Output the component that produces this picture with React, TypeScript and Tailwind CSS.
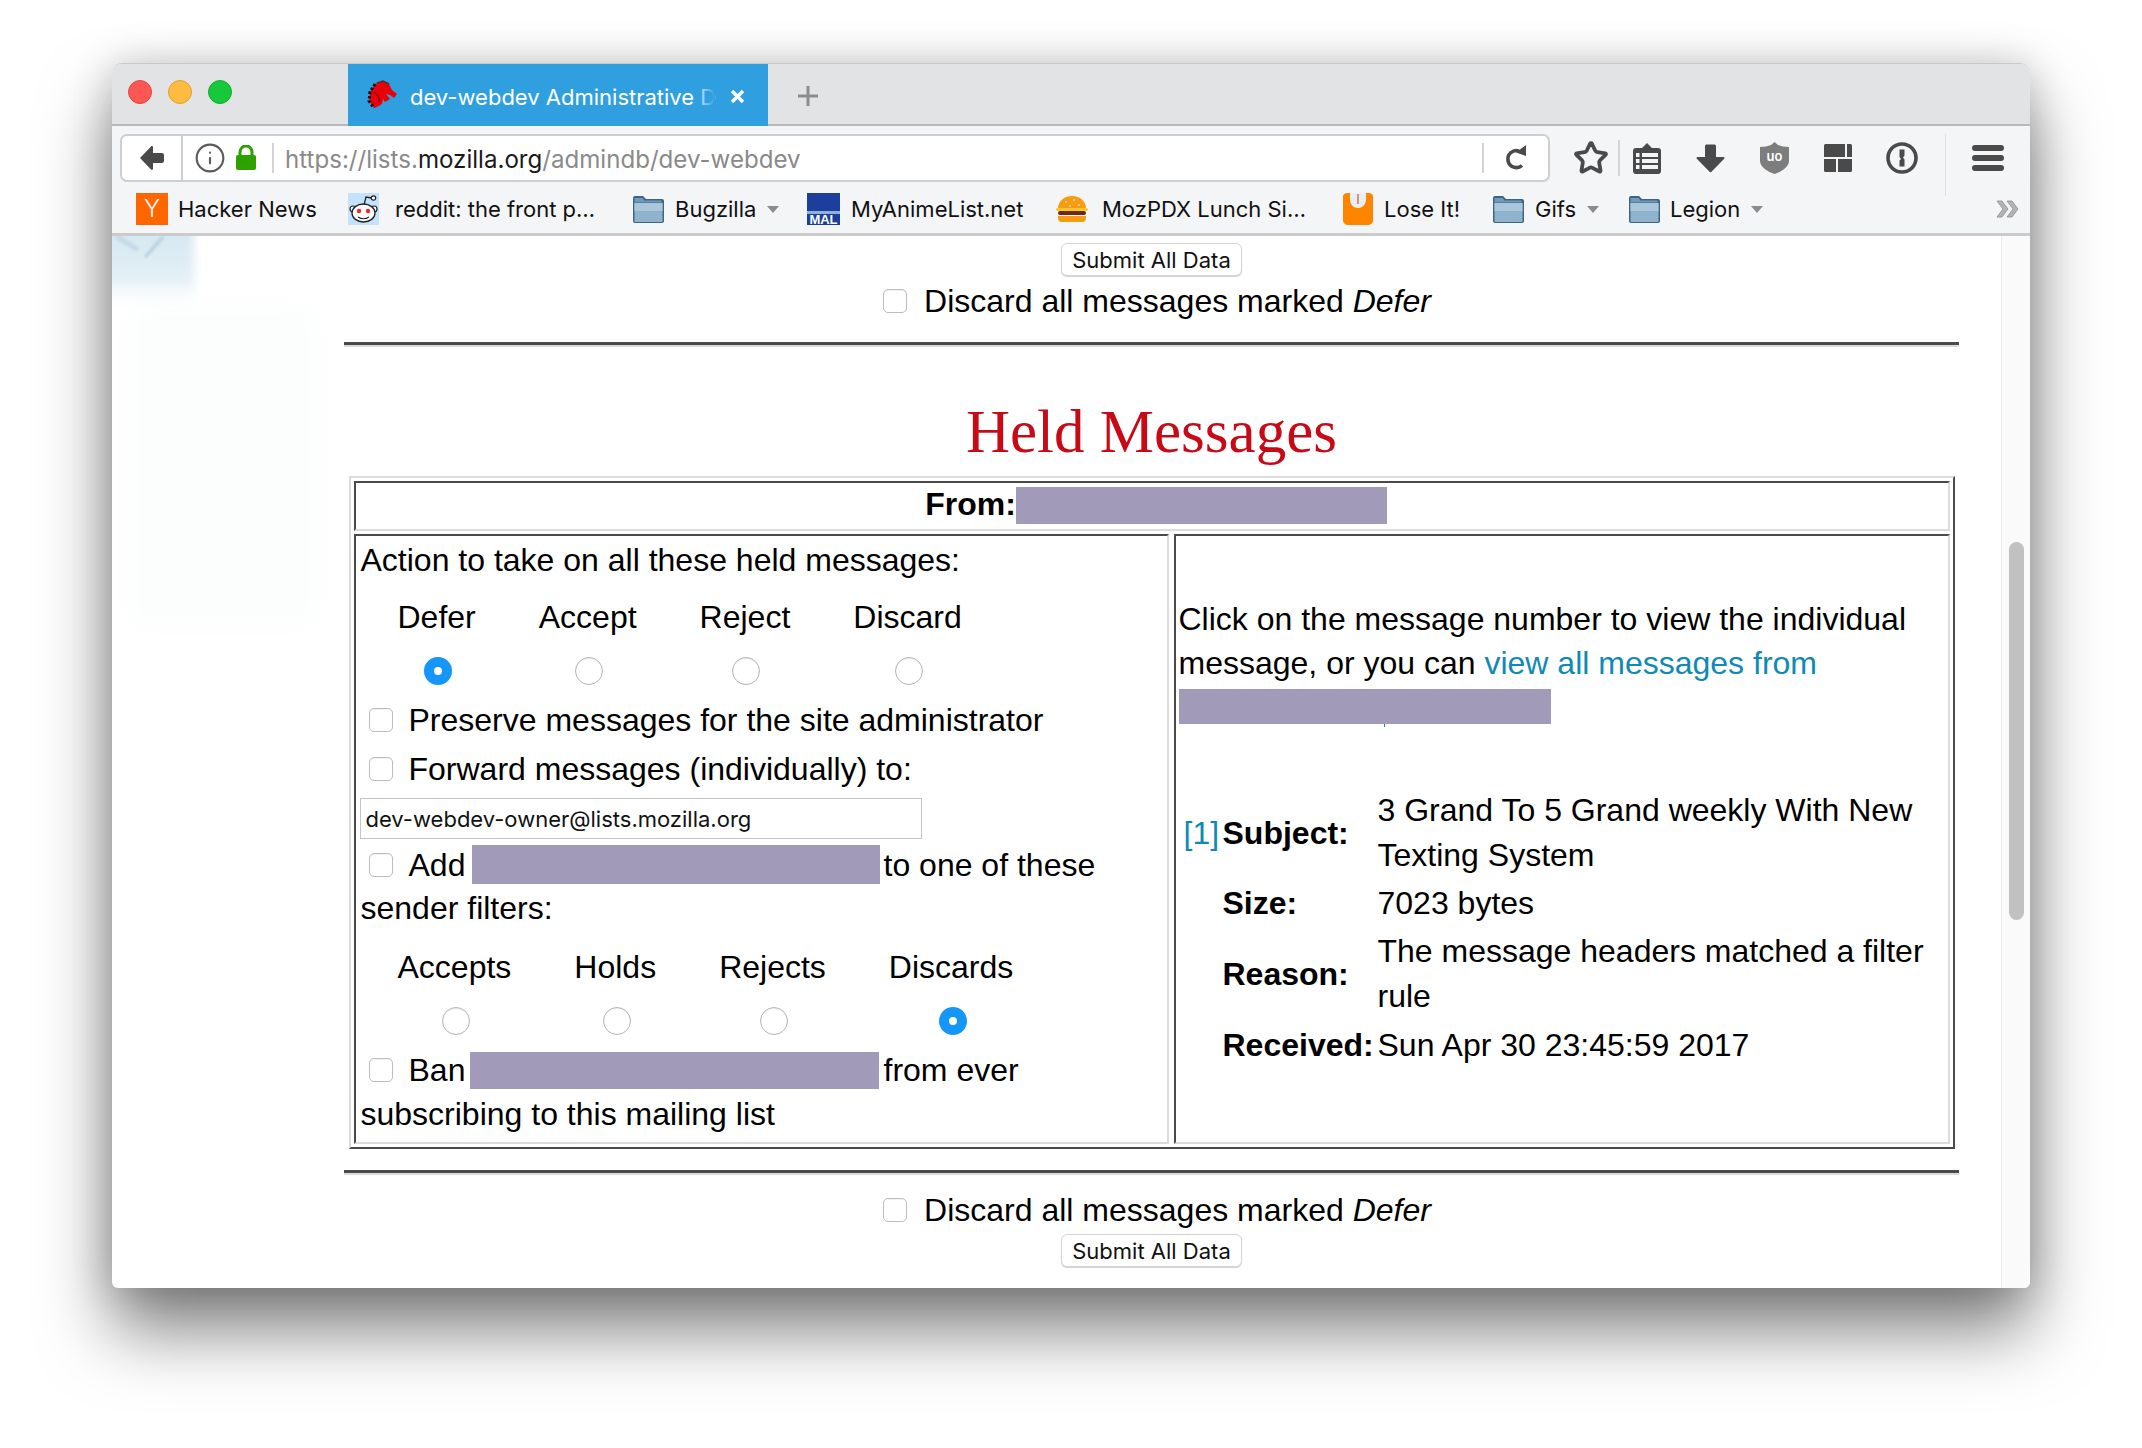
import React from 'react'
import { Star, Info } from 'lucide-react'

const UI_FONT = 'font-["Inter","Noto_Sans",sans-serif]'

function Redact({ className = '' }: { className?: string }) {
	return <span className={`block shrink-0 bg-[#a29ab9] ${className}`} />
}

function Check() {
	return (
		<input
			type="checkbox"
			readOnly
			className="block w-[24px] h-[24px] shrink-0 appearance-none rounded-[5px] border border-[#bdbdbd] bg-white shadow-[inset_0_1px_1px_rgba(0,0,0,0.06)]"
		/>
	)
}

function Radio({ checked = false }: { checked?: boolean }) {
	return (
		<input
			type="radio"
			readOnly
			checked={checked}
			className={
				checked
					? 'block w-[28px] h-[28px] appearance-none rounded-full border-[10px] border-[#1496fb] bg-white'
					: 'block w-[28px] h-[28px] appearance-none rounded-full border border-[#b5b5b5] bg-white shadow-[inset_0_1px_1px_rgba(0,0,0,0.08)]'
			}
		/>
	)
}

function SubmitButton() {
	return (
		<button className={`block w-[181px] h-[33px] rounded-[6px] border border-[#d4d4d4] bg-white text-[22px] leading-none text-[#111] shadow-[0_1px_1px_rgba(0,0,0,0.18)] ${UI_FONT}`}>
			Submit All Data
		</button>
	)
}

function DiscardRow({ className = '' }: { className?: string }) {
	return (
		<div className={`flex items-center h-[44px] pl-[11px] ${className}`}>
			<Check />
			<span className="ml-[17px]">
				Discard all messages marked <em>Defer</em>
			</span>
		</div>
	)
}

function Rule({ className = '' }: { className?: string }) {
	return <div className={`w-[1615px] h-[5px] border-t-[3px] border-b-[2px] border-t-[#4a4a4a] border-b-[#dcdcdc] ${className}`} />
}

function Folder() {
	return (
		<svg width="33" height="30" viewBox="0 0 33 30" className="shrink-0">
			<path d="M1 4a2 2 0 0 1 2-2h8l3 3h16a2 2 0 0 1 2 2v20a2 2 0 0 1-2 2H3a2 2 0 0 1-2-2z" fill="#3f6483" />
			<path d="M2.5 9h28v18a1 1 0 0 1-1 1h-26a1 1 0 0 1-1-1z" fill="#8fb3cd" />
			<path d="M2.5 9h28v8h-28z" fill="#a9c6da" />
			<path d="M2.5 4h8l2 2.5h17v2h-27z" fill="#6f9abb" />
		</svg>
	)
}

function Caret() {
	return <span className="ml-[11px] w-0 h-0 border-x-[6px] border-x-transparent border-t-[7px] border-t-[#8b8b8b]" />
}

function Bookmarks() {
	return (
		<div className={`flex items-center h-[46px] pl-[24px] text-[22px] text-[#111] ${UI_FONT}`}>
			<div className="flex items-center w-[212px]">
				<span className="flex items-center justify-center w-[32px] h-[32px] bg-[#ff6600] text-white text-[24px] font-light leading-none">Y</span>
				<span className="ml-[10px]">Hacker News</span>
			</div>
			<div className="flex items-center w-[284px]">
				<svg width="31" height="32" viewBox="0 0 31 32" className="shrink-0">
					<rect width="31" height="32" fill="#c4e2fb" />
					<path d="M16 12 L18 4 L24 5" stroke="#222" strokeWidth="1.3" fill="none" />
					<circle cx="25.5" cy="5" r="2.2" fill="#fff" stroke="#222" strokeWidth="1.2" />
					<circle cx="5" cy="16" r="3" fill="#fff" stroke="#222" strokeWidth="1.2" />
					<circle cx="26" cy="16" r="3" fill="#fff" stroke="#222" strokeWidth="1.2" />
					<ellipse cx="15.5" cy="20" rx="11.5" ry="9" fill="#fff" stroke="#222" strokeWidth="1.3" />
					<circle cx="11" cy="18" r="2.2" fill="#f22" />
					<circle cx="20" cy="18" r="2.2" fill="#f22" />
					<path d="M10 24q5.5 3.5 11 0" stroke="#222" strokeWidth="1.2" fill="none" />
				</svg>
				<span className="ml-[16px]">reddit: the front p…</span>
			</div>
			<div className="flex items-center w-[175px]">
				<Folder />
				<span className="ml-[10px]">Bugzilla</span>
				<Caret />
			</div>
			<div className="flex items-center w-[249px]">
				<svg width="33" height="32" viewBox="0 0 33 32" className="shrink-0">
					<rect width="33" height="32" fill="#1c3f9e" />
					<rect y="18" width="33" height="3" fill="#8fb0d8" />
					<text x="16.5" y="31" textAnchor="middle" fontSize="13" fontWeight="700" fill="#fff" fontFamily="Liberation Sans, sans-serif">MAL</text>
				</svg>
				<span className="ml-[11px]">MyAnimeList.net</span>
			</div>
			<div className="flex items-center w-[286px]">
				<svg width="32" height="28" viewBox="0 0 32 28" className="shrink-0">
					<path d="M2 14C2 5 9 1 16 1s14 4 14 13z" fill="#f59c12" />
					<circle cx="10" cy="7" r="1" fill="#fbd9a0" />
					<circle cx="18" cy="5" r="1" fill="#fbd9a0" />
					<circle cx="23" cy="10" r="1" fill="#fbd9a0" />
					<circle cx="14" cy="11" r="1" fill="#fbd9a0" />
					<rect x="0" y="13" width="32" height="3" rx="1.500" fill="#fdc52a" />
					<rect x="2" y="16" width="28" height="4" rx="2" fill="#6e2a10" />
					<path d="M2 21h28v2a4 4 0 0 1-4 4H6a4 4 0 0 1-4-4z" fill="#f59c12" />
				</svg>
				<span className="ml-[14px]">MozPDX Lunch Si…</span>
			</div>
			<div className="flex items-center w-[150px]">
				<svg width="32" height="32" viewBox="0 0 32 32" className="shrink-0">
					<path d="M5 0h22a4 4 0 0 1 4 5v21a5 5 0 0 1-5 6H6a5 5 0 0 1-5-6V5a4 4 0 0 1 4-5z" fill="#ff8400" />
					<path d="M8 0h16v7a8 8 0 0 1-16 0z" fill="#e9eef2" />
					<path d="M16 1v10" stroke="#d94a3a" strokeWidth="1.2" />
				</svg>
				<span className="ml-[10px]">Lose It!</span>
			</div>
			<div className="flex items-center w-[136px]">
				<Folder />
				<span className="ml-[10px]">Gifs</span>
				<Caret />
			</div>
			<div className="flex items-center w-[368px]">
				<Folder />
				<span className="ml-[9px]">Legion</span>
				<Caret />
			</div>
			<svg width="24" height="18" viewBox="0 0 24 18" className="shrink-0">
				<path d="M1 1h5l6 8-6 8H1l6-8z" fill="#b4b4b4" stroke="#8d8d8d" strokeWidth="0.8" />
				<path d="M11 1h5l6 8-6 8h-5l6-8z" fill="#b4b4b4" stroke="#8d8d8d" strokeWidth="0.8" />
			</svg>
		</div>
	)
}

function Toolbar() {
	return (
		<div className="flex items-start h-[61px] pt-[8px] pl-[8px]">
			<div className="flex items-center w-[1430px] h-[48px] rounded-[7px] border-2 border-[#cfcfd1] bg-white">
				<div className="flex items-center justify-center w-[61px] h-full border-r-2 border-[#cfcfd1]">
					<svg width="26" height="26" viewBox="0 0 26 26">
						<path d="M1 13 12 1.5c.8-.8 2-.3 2 .8V8h9a2 2 0 0 1 2 2v6a2 2 0 0 1-2 2h-9v5.700c0 1.100-1.200 1.600-2 .8z" fill="#4a4a4a" />
					</svg>
				</div>
				<Info size={32} strokeWidth={1.6} color="#5b5b5b" className="ml-[11px]" />
				<svg width="22" height="26" viewBox="0 0 22 26" className="ml-[9px]">
					<path d="M5 11V7a6 6 0 0 1 12 0v4" fill="none" stroke="#2ba200" strokeWidth="3" />
					<rect x="1" y="10" width="20" height="15" rx="2" fill="#2ba200" />
				</svg>
				<div className="ml-[15px] w-[2px] h-[30px] bg-[#d4d4d6]" />
				<div className={`ml-[11px] w-[1197px] pt-[5px] text-[24.100px] leading-none text-[#8a8a8a] whitespace-nowrap ${UI_FONT}`}>
					https://lists.<span className="text-[#1a1a1a]">mozilla.org</span>/admindb/dev-webdev
				</div>
				<div className="w-[2px] h-[30px] bg-[#d4d4d6]" />
				<div className="flex items-center justify-center flex-1">
					<svg width="24" height="28" viewBox="0 0 24 28">
						<path d="M18 21.500A8.500 8.500 0 1 1 15 7" fill="none" stroke="#4a4a4a" strokeWidth="3.600" />
						<path d="M12 8.500 22 1v11z" fill="#4a4a4a" />
					</svg>
				</div>
			</div>
			<div className="flex items-center h-[48px]">
				<div className="flex items-center justify-center ml-[14px] w-[54px] h-[48px]">
					<Star size={36} strokeWidth={2.5} color="#4a4a4a" />
				</div>
				<div className="flex items-center justify-center w-[60px] pr-[4px] h-[36px] border-l-2 border-[#d4d4d6]">
					<svg width="28" height="31" viewBox="0 0 28 31">
						<path d="M3 5h6l5-5 5 5h6a3 3 0 0 1 3 3v20a3 3 0 0 1-3 3H3a3 3 0 0 1-3-3V8a3 3 0 0 1 3-3z" fill="#4a4a4a" />
						<rect x="3" y="10" width="3.500" height="4" fill="#f4f5f7" />
						<rect x="9" y="10" width="16" height="4" fill="#f4f5f7" />
						<rect x="3" y="16" width="3.500" height="4" fill="#f4f5f7" />
						<rect x="9" y="16" width="16" height="4" fill="#f4f5f7" />
						<rect x="3" y="22" width="3.500" height="4" fill="#f4f5f7" />
						<rect x="9" y="22" width="16" height="4" fill="#f4f5f7" />
					</svg>
				</div>
				<div className="flex items-center justify-center w-[64px]">
					<svg width="29" height="29" viewBox="0 0 29 29">
						<path d="M9 2a1.500 1.500 0 0 1 1.500-1.500h8A1.500 1.500 0 0 1 20 2v11h7.500a1 1 0 0 1 .7 1.700L15.200 28a1 1 0 0 1-1.400 0L.8 14.700A1 1 0 0 1 1.500 13H9z" fill="#4a4a4a" />
					</svg>
				</div>
				<div className="flex items-center justify-center w-[64px]">
					<svg width="29" height="32" viewBox="0 0 29 32">
						<path d="M14.500 0 18 3c3 1 7 2 11 2v14c0 6-8 11-14.500 13C8 30 0 25 0 19V5c4 0 8-1 11-2z" fill="#7d7d7d" />
						<text x="14.500" y="19" textAnchor="middle" fontSize="13" fontWeight="600" fill="#fff" fontFamily="Inter, sans-serif">uo</text>
					</svg>
				</div>
				<div className="flex items-center justify-center w-[64px]">
					<svg width="28" height="28" viewBox="0 0 28 28">
						<path d="M1.500 0H21v13H0V1.500A1.500 1.500 0 0 1 1.500 0z" fill="#4a4a4a" />
						<path d="M23 0h3.500A1.500 1.500 0 0 1 28 1.500V13h-5z" fill="#4a4a4a" />
						<path d="M0 15h12v13H1.500A1.500 1.500 0 0 1 0 26.500z" fill="#4a4a4a" />
						<path d="M14 15h14v11.500a1.500 1.500 0 0 1-1.500 1.500H14z" fill="#4a4a4a" />
					</svg>
				</div>
				<div className="flex items-center justify-center w-[64px]">
					<svg width="32" height="32" viewBox="0 0 32 32">
						<circle cx="16" cy="16" r="14" fill="none" stroke="#4a4a4a" strokeWidth="3.600" />
						<path d="M13.500 7.500h5v6l-1.500 2 1.500 2v7h-5v-6l1.500-1.500-1.500-2z" fill="#4a4a4a" />
					</svg>
				</div>
				<div className="ml-[11px] mt-[14px] w-[1px] h-[62px] bg-[#e0e1e4]" />
				<div className="flex items-center justify-center w-[84px]">
					<div className="flex flex-col gap-[4px] w-[32px]">
						<span className="h-[6px] rounded-full bg-[#4a4a4a]" />
						<span className="h-[6px] rounded-full bg-[#4a4a4a]" />
						<span className="h-[6px] rounded-full bg-[#4a4a4a]" />
					</div>
				</div>
			</div>
		</div>
	)
}

function TitleBar() {
	return (
		<div className="flex h-[62px] border-b-2 border-[#b7b8ba] bg-[#e2e3e5]">
			<div className="flex items-center gap-[16px] pl-[16px] w-[236px] pb-[4px]">
				<span className="w-[24px] h-[24px] rounded-full bg-[#fc5753] border border-[#df4744]" />
				<span className="w-[24px] h-[24px] rounded-full bg-[#fdbc40] border border-[#dea034]" />
				<span className="w-[24px] h-[24px] rounded-full bg-[#17c93a] border border-[#14ae2e]" />
			</div>
			<div className={`flex items-center w-[420px] h-[62px] bg-[#2f9fe0] pl-[17px] ${UI_FONT}`}>
				<svg width="33" height="30" viewBox="0 0 33 30" className="shrink-0">
					<path d="M9 28 4 21l1-9 5-8 8-3 6 3 3 6 5 4-3 4-4-3-4-1 4 5-5 3-2-3-1 5-3 2z" fill="#ea0008" />
					<path d="M10 4 5 12l-1 9 5 7" fill="none" stroke="#111" strokeWidth="3" strokeDasharray="2.500 2" />
					<path d="M12 3l6-2 6 3" fill="none" stroke="#5a2a2a" strokeWidth="1.500" />
					<path d="M9 12l5 5v5" fill="none" stroke="#b00008" strokeWidth="2" />
				</svg>
				<div className="relative ml-[12px] w-[305px] whitespace-nowrap pt-[3px] text-[22px] leading-none text-white">
					dev-webdev Administrative D
					<span className="absolute inset-y-0 right-0 w-[22px] bg-gradient-to-r from-transparent to-[#2f9fe0]" />
				</div>
				<svg width="15" height="15" viewBox="0 0 15 15" className="ml-[15px] mt-[2px]">
					<path d="M2 2l11 11M13 2 2 13" stroke="#fff" strokeWidth="3.400" />
				</svg>
			</div>
			<div className="flex items-center pl-[29px] pt-[4px]">
				<svg width="22" height="22" viewBox="0 0 22 22">
					<path d="M11 1v20M1 11h20" stroke="#8c8c8c" strokeWidth="3" />
				</svg>
			</div>
		</div>
	)
}

function OptionColumn({ label, checked = false }: { label: string; checked?: boolean }) {
	return (
		<div className="flex flex-col items-center">
			<div className="h-[44px]">{label}</div>
			<div className="mt-[18px] ml-[3px]">
				<Radio checked={checked} />
			</div>
		</div>
	)
}

function LeftCell() {
	return (
		<div className="w-[815px] h-[610px] px-[5px] pt-[2px] border-2 border-t-[#4a4a4a] border-l-[#4a4a4a] border-r-[#dcdcdc] border-b-[#dcdcdc]">
			<div className="h-[44px]">Action to take on all these held messages:</div>
			<div className="flex gap-[63px] ml-[37px] mt-[13px]">
				<OptionColumn label="Defer" checked />
				<OptionColumn label="Accept" />
				<OptionColumn label="Reject" />
				<OptionColumn label="Discard" />
			</div>
			<div className="flex items-center h-[44px] mt-[13px] pl-[8px] gap-[16px]">
				<Check />
				<span>Preserve messages for the site administrator</span>
			</div>
			<div className="flex items-center h-[44px] mt-[5px] pl-[8px] gap-[16px]">
				<Check />
				<span>Forward messages (individually) to:</span>
			</div>
			<input
				readOnly
				defaultValue="dev-webdev-owner@lists.mozilla.org"
				className={`block w-[562px] h-[41px] mt-[7px] -ml-[1px] px-[5px] border border-[#c4c4c4] bg-white text-[22px] text-[#111] ${UI_FONT}`}
			/>
			<div className="flex items-center h-[43px] mt-[4px] pl-[8px]">
				<Check />
				<span className="ml-[16px] w-[63px]">Add</span>
				<Redact className="w-[408px] h-[39px]" />
				<span className="ml-[4px]">to one of these</span>
			</div>
			<div className="h-[44px]">sender filters:</div>
			<div className="flex gap-[63px] ml-[37px] mt-[15px]">
				<OptionColumn label="Accepts" />
				<OptionColumn label="Holds" />
				<OptionColumn label="Rejects" />
				<OptionColumn label="Discards" checked />
			</div>
			<div className="flex items-center h-[44px] mt-[13px] pl-[8px]">
				<Check />
				<span className="ml-[16px] w-[61px]">Ban</span>
				<Redact className="w-[409px] h-[37px]" />
				<span className="ml-[5px]">from ever</span>
			</div>
			<div className="h-[44px]">subscribing to this mailing list</div>
		</div>
	)
}

function RightCell() {
	return (
		<div className="w-[776px] h-[610px] px-[3px] pt-[61px] border-2 border-t-[#4a4a4a] border-l-[#4a4a4a] border-r-[#dcdcdc] border-b-[#dcdcdc]">
			<div className="leading-[44px]">
				Click on the message number to view the individual
				<br />
				message, or you can <a className="text-[#0f8ab5]">view all messages from</a>
			</div>
			<div className="relative mt-[4px] w-[372px] h-[35px]">
				<Redact className="w-[372px] h-[35px]" />
				<span className="absolute left-[205px] top-[35px] w-[1px] h-[3px] bg-[#0f8ab5]" />
			</div>
			<div className="grid grid-cols-[39px_155px_1fr] gap-y-[3px] items-center leading-[45px] mt-[64px] pl-[5px]">
				<a className="text-[#0f8ab5]">[1]</a>
				<b>Subject:</b>
				<div>3 Grand To 5 Grand weekly With New Texting System</div>
				<span />
				<b>Size:</b>
				<div>7023 bytes</div>
				<span />
				<b>Reason:</b>
				<div>The message headers matched a filter rule</div>
				<span />
				<b className="mt-[1px]">Received:</b>
				<div className="mt-[1px]">Sun Apr 30 23:45:59 2017</div>
			</div>
		</div>
	)
}

function HeldTable() {
	return (
		<div className="flex flex-col gap-[3px] w-[1606px] p-[3px] border-2 border-t-[#dcdcdc] border-l-[#dcdcdc] border-r-[#4a4a4a] border-b-[#4a4a4a]">
			<div className="flex items-center justify-center h-[50px] pl-[9px] pb-[2px] border-2 border-t-[#4a4a4a] border-l-[#4a4a4a] border-r-[#dcdcdc] border-b-[#dcdcdc]">
				<b className="-mt-[2px]">From:</b>
				<Redact className="w-[371px] h-[37px]" />
			</div>
			<div className="flex gap-[5px]">
				<LeftCell />
				<RightCell />
			</div>
		</div>
	)
}

function Watermark() {
	return (
		<svg width="220" height="400" viewBox="0 0 220 400" className="absolute left-0 top-0">
			<defs>
				<linearGradient id="smudge" x1="0" y1="0" x2="0" y2="1">
					<stop offset="0" stopColor="#d4e7f1" />
					<stop offset="0.6" stopColor="#e2eff5" />
					<stop offset="1" stopColor="#ffffff" stopOpacity="0" />
				</linearGradient>
				<filter id="soft">
					<feGaussianBlur stdDeviation="5" />
				</filter>
				<filter id="thin">
					<feGaussianBlur stdDeviation="1.500" />
				</filter>
				<filter id="softer">
					<feGaussianBlur stdDeviation="14" />
				</filter>
			</defs>
			<rect x="16" y="70" width="190" height="320" fill="#fcfdfd" filter="url(#softer)" />
			<rect x="-10" y="-10" width="92" height="86" fill="url(#smudge)" filter="url(#soft)" />
			<path d="M4 0l22 14" fill="none" stroke="#c3d9e6" strokeWidth="5" filter="url(#thin)" />
			<path d="M33 21 51 1" fill="none" stroke="#b2cdde" strokeWidth="3" filter="url(#thin)" />
		</svg>
	)
}

export default function App() {
	return (
		<div className="w-[2142px] h-[1448px] pt-[63px] pl-[112px] bg-white overflow-hidden">
			<div className="flex flex-col w-[1918px] h-[1225px] rounded-t-[10px] rounded-b-[6px] overflow-hidden bg-white border-t border-[#c9c9cb] shadow-[0_42px_70px_rgba(0,0,0,0.5),0_0_40px_rgba(0,0,0,0.18)]">
				<TitleBar />
				<div className="h-[110px] border-b-[3px] border-[#cbcbcd] bg-[#f4f5f7]">
					<Toolbar />
					<div className="-mt-[1px]">
						<Bookmarks />
					</div>
				</div>
				<div className="flex flex-1 min-h-0">
					<div className={`relative flex-1 pl-[232px] font-["Liberation_Sans",Arial,sans-serif] text-[32px] leading-[44px] text-black`}>
						<Watermark />
						<div className="relative flex flex-col items-center w-[1615px]">
							<div className="mt-[7px]">
								<SubmitButton />
							</div>
							<DiscardRow className="mt-[3px]" />
							<Rule className="mt-[19px]" />
							<h1 className={`mt-[49px] h-[72px] font-["Liberation_Serif",serif] text-[61px] leading-[72px] text-[#c80a17]`}>Held Messages</h1>
							<div className="mt-[8px]">
								<HeldTable />
							</div>
							<Rule className="mt-[21px]" />
							<DiscardRow className="mt-[13px]" />
							<div className="mt-[2px]">
								<SubmitButton />
							</div>
						</div>
					</div>
					<div className="w-[29px] shrink-0 pt-[306px] pl-[7px] border-l border-[#ececec] bg-[#fafafa]">
						<div className="w-[15px] h-[378px] rounded-full bg-[#c1c1c1]" />
					</div>
				</div>
			</div>
		</div>
	)
}
